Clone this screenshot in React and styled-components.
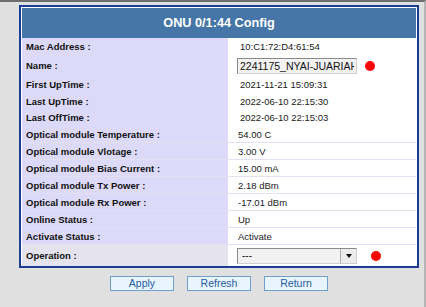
import styled, { createGlobalStyle } from "styled-components";

const GlobalStyle = createGlobalStyle`
  html, body {
    margin: 0;
    padding: 0;
    background: #e0e0e0;
  }
  body {
    font-family: "Liberation Sans", Arial, sans-serif;
  }
`;

const Page = styled.div`
  box-sizing: border-box;
  width: 426px;
  height: 307px;
  background: #e0e0e0;
  border-top: 2px solid #6e6e6e;
  border-right: 2px solid #b4b4b4;
  padding: 3px 0 0 19px;
  overflow: hidden;
`;

const Panel = styled.div`
  box-sizing: border-box;
  width: 400px;
  border: 2px solid #1b3d96;
  padding: 1px 1px 0 1px;
  background: #ffffff;
`;

const Header = styled.div`
  height: 30px;
  background: #4676a8;
  color: #ffffff;
  font-weight: 700;
  font-size: 12.7px;
  display: flex;
  align-items: center;
  justify-content: center;
`;

const Row = styled.div`
  display: grid;
  grid-template-columns: 206px 1fr;
  height: ${(p) => p.$h || 16}px;
  border-top: ${(p) => (p.$lined ? "1px solid #e3e1f1" : "none")};
`;

const Label = styled.div`
  background: ${(p) => (p.$muted ? "#e4e3ee" : "#dcdaf8")};
  color: #111;
  font-weight: 700;
  font-size: 9.5px;
  padding-left: 4px;
  display: flex;
  align-items: center;
  white-space: nowrap;
`;

const Value = styled.div`
  background: #ffffff;
  color: #1a1a1a;
  font-size: 9.5px;
  padding-left: ${(p) => p.$pad || 10}px;
  display: flex;
  align-items: center;
  gap: ${(p) => p.$gap || 8}px;
  white-space: nowrap;
`;

const TextInput = styled.input`
  box-sizing: border-box;
  width: 120px;
  height: 16px;
  margin: 0;
  padding: 0 2px;
  font-family: "Liberation Sans", Arial, sans-serif;
  font-size: 10.5px;
  color: #111;
  background: #f2f2f2;
  border: 1px solid;
  border-color: #8a8a8a #d0d0d0 #d0d0d0 #8a8a8a;
  outline: none;
`;

const Select = styled.div`
  box-sizing: border-box;
  width: 120px;
  height: 16px;
  display: flex;
  background: #f2f2f2;
  border: 1px solid;
  border-color: #8a8a8a #d0d0d0 #d0d0d0 #8a8a8a;
  font-size: 10px;
  color: #111;
`;

const SelectText = styled.span`
  flex: 1;
  padding-left: 4px;
  display: flex;
  align-items: center;
`;

const SelectArrow = styled.span`
  width: 15px;
  border-left: 1px solid #b0b0b0;
  background: #ececec;
  display: flex;
  align-items: center;
  justify-content: center;
  &::after {
    content: "";
    border-left: 3px solid transparent;
    border-right: 3px solid transparent;
    border-top: 4px solid #111;
  }
`;

const Dot = styled.span`
  width: 10px;
  height: 10px;
  border-radius: 50%;
  background: #ff0000;
  flex: none;
`;

const Buttons = styled.div`
  width: 400px;
  margin-top: 8px;
  display: flex;
  justify-content: center;
  gap: 13px;
`;

const Button = styled.button`
  box-sizing: border-box;
  width: 64px;
  height: 15px;
  margin: 0;
  padding: 0;
  background: #e8f4ff;
  border: 1px solid #72a0cc;
  color: #255d9c;
  font-family: "Liberation Sans", Arial, sans-serif;
  font-size: 10.5px;
  line-height: 13px;
`;

const plainRows = [
  ["Optical module Vlotage :", "3.00 V"],
  ["Optical module Bias Current :", "15.00 mA"],
  ["Optical module Tx Power :", "2.18 dBm"],
  ["Optical module Rx Power :", "-17.01 dBm"],
  ["Online Status :", "Up"],
  ["Activate Status :", "Activate"],
];

export default function App() {
  return (
    <Page>
      <GlobalStyle />
      <Panel>
        <Header>ONU 0/1:44 Config</Header>
        <Row $h={17}>
          <Label>Mac Address :</Label>
          <Value $pad={12}>10:C1:72:D4:61:54</Value>
        </Row>
        <Row $h={21}>
          <Label>Name :</Label>
          <Value $pad={9}>
            <TextInput defaultValue="2241175_NYAI-JUARIAH" />
            <Dot />
          </Value>
        </Row>
        <Row $h={17}>
          <Label>First UpTime :</Label>
          <Value $pad={12}>2021-11-21 15:09:31</Value>
        </Row>
        <Row $h={16}>
          <Label>Last UpTime :</Label>
          <Value $pad={12}>2022-06-10 22:15:30</Value>
        </Row>
        <Row $h={17}>
          <Label>Last OffTime :</Label>
          <Value $pad={12}>2022-06-10 22:15:03</Value>
        </Row>
        <Row $h={16}>
          <Label>Optical module Temperature :</Label>
          <Value>54.00 C</Value>
        </Row>
        {plainRows.map(([label, value]) => (
          <Row key={label} $lined>
            <Label>{label}</Label>
            <Value>{value}</Value>
          </Row>
        ))}
        <Row $h={21} $lined>
          <Label $muted>Operation :</Label>
          <Value $pad={9} $gap={14}>
            <Select>
              <SelectText>---</SelectText>
              <SelectArrow />
            </Select>
            <Dot />
          </Value>
        </Row>
      </Panel>
      <Buttons>
        <Button>Apply</Button>
        <Button>Refresh</Button>
        <Button>Return</Button>
      </Buttons>
    </Page>
  );
}
